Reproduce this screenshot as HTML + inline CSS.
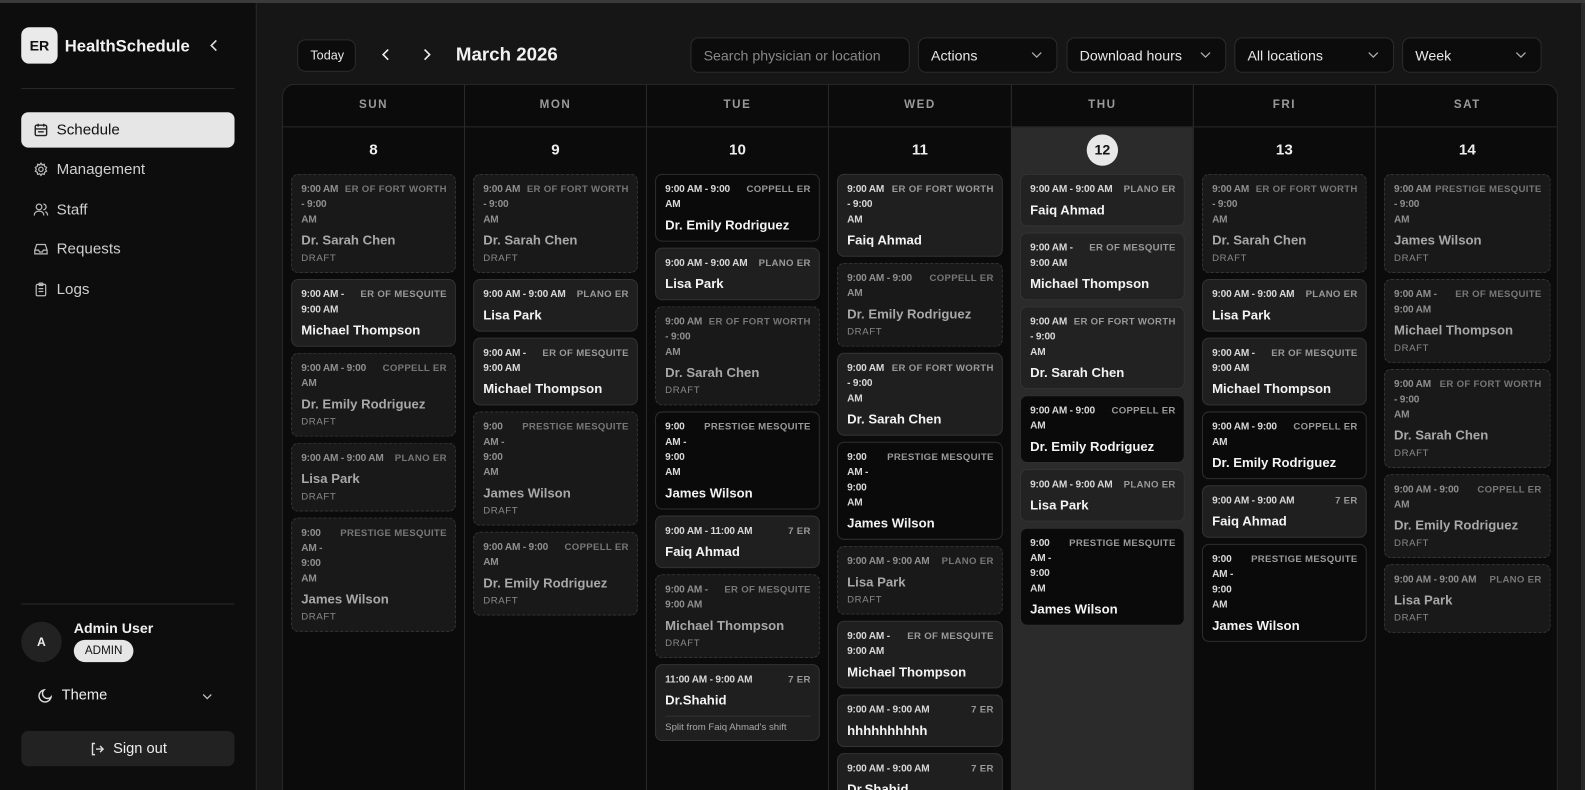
<!DOCTYPE html>
<html><head><meta charset="utf-8"><style>
*{box-sizing:border-box;margin:0;padding:0}
html,body{width:1585px;height:790px;overflow:hidden;background:#161616}
#w{position:absolute;left:0;top:0;width:1568px;height:782px;transform:scale(1.0109);transform-origin:0 0;overflow:hidden;background:#161616}
body{font-family:"Liberation Sans",sans-serif;color:#eee;position:relative}
.topbar{position:absolute;left:0;top:0;width:1568px;height:3px;background:#3a3a3a}
.side{position:absolute;left:0;top:3px;width:254px;height:787px;background:#0d0d0d;border-right:1px solid #2a2a2a}
.logo{position:absolute;left:21px;top:24px;width:36px;height:36px;border-radius:8px;background:#eaeaea;color:#111;font-weight:700;font-size:14px;display:flex;align-items:center;justify-content:center}
.brand{position:absolute;left:64px;top:34px;font-size:16.5px;font-weight:700;color:#f2f2f2}
.hr{position:absolute;left:21px;width:211px;height:1px;background:#2a2a2a}
.nav{position:absolute;left:21px;width:211px;height:35px;border-radius:7px;display:flex;align-items:center;padding-left:35px;font-size:15px;color:#cfcfcf}
.nav.act{background:#e6e6e6;color:#111}
.nav svg{position:absolute;left:12px;top:10px}
.btn{position:absolute;height:32px;border:1px solid #2c2c2c;border-radius:8px;background:#0c0c0c;font-size:14px;color:#e8e8e8;display:flex;align-items:center;padding-left:12px}
.btn svg{position:absolute;right:14px;top:13px}
.cal{position:absolute;left:279px;top:83px;width:1262px;height:707px;border:1px solid #2a2a2a;border-bottom:none;border-radius:12px 12px 0 0;background:#0b0b0b;overflow:hidden}
.col{position:absolute;top:0;height:707px;border-left:1px solid #2a2a2a;overflow:hidden}
.col .h{height:42px;border-bottom:1px solid #2a2a2a;text-align:center;font-size:11.5px;letter-spacing:1.5px;font-weight:700;color:#9a9a9a;line-height:41px}
.col .d{height:46px;text-align:center;font-size:15px;font-weight:700;color:#eee;line-height:46px}
.today .d span{display:inline-block;width:31px;height:31px;border-radius:50%;background:#e8e8e8;color:#111;line-height:31px;font-size:14px;margin-top:7px}
.c{margin:0 8px 6px 8px;border:1px solid #333;border-radius:7px;padding:7px 8px 6px 9px;background:#1f1f1f;position:relative}
.c.dr{border:1px dashed #353535;background:#191919}
.c.bk{background:#0a0a0a;border-color:#2e2e2e}
.t{font-size:10px;line-height:15px;font-weight:700;color:#d8d8d8;white-space:nowrap;letter-spacing:-.2px}
.l{position:absolute;right:8px;top:7px;font-size:9.5px;line-height:15px;font-weight:700;letter-spacing:.3px;color:#9a9a9a;white-space:nowrap}
.n{font-size:13px;font-weight:700;color:#f3f3f3;margin-top:4px;line-height:18px}
.dr .t{color:#8f8f8f}.dr .l{color:#777}.dr .n{color:#a8a8a8}
.df{font-size:9.5px;color:#8a8a8a;letter-spacing:.6px;margin-top:2px;line-height:14px}
.sp{font-size:9.5px;color:#aaa;border-top:1px solid #333;margin-top:6px;padding-top:4px;line-height:13px}
</style></head><body><div id="w">
<div class="topbar"></div>
<div class="side">
<div class="logo">ER</div>
<div class="brand">HealthSchedule</div>
<svg style="position:absolute;left:206px;top:35px" width="12" height="14" viewBox="0 0 12 14"><path d="M8 2L3 7l5 5" stroke="#ddd" stroke-width="1.6" fill="none"/></svg>
<div class="hr" style="top:84px"></div>
<div class="nav act" style="top:108px"><svg width="15" height="15" viewBox="0 0 16 16" fill="none" stroke="#222" stroke-width="1.5"><rect x="2" y="3" width="12" height="11" rx="1.5"/><path d="M5 1.5v3M11 1.5v3M2 7h12M5 10h6"/></svg>Schedule</div>
<div class="nav" style="top:147px"><svg width="15" height="15" viewBox="0 0 16 16" fill="none" stroke="#bbb" stroke-width="1.3"><circle cx="8" cy="8" r="2.3"/><path d="M8 1.5l1.3 1.8 2.2-.6.4 2.2 2 1.1-1 2 1 2-2 1.1-.4 2.2-2.2-.6L8 14.5l-1.3-1.8-2.2.6-.4-2.2-2-1.1 1-2-1-2 2-1.1.4-2.2 2.2.6z"/></svg>Management</div>
<div class="nav" style="top:187px"><svg width="15" height="15" viewBox="0 0 16 16" fill="none" stroke="#bbb" stroke-width="1.3"><circle cx="6" cy="5" r="3"/><path d="M1 14c0-3 2-4.5 5-4.5s5 1.5 5 4.5M10.5 2a3 3 0 010 6M12.5 10c1.5.5 2.5 2 2.5 4"/></svg>Staff</div>
<div class="nav" style="top:226px"><svg width="15" height="15" viewBox="0 0 16 16" fill="none" stroke="#bbb" stroke-width="1.3"><path d="M1.5 9l2-6h9l2 6v4h-13zM1.5 9h4l1 2h3l1-2h4"/></svg>Requests</div>
<div class="nav" style="top:266px"><svg width="15" height="15" viewBox="0 0 16 16" fill="none" stroke="#bbb" stroke-width="1.3"><rect x="3" y="2.5" width="10" height="12" rx="1.3"/><rect x="6" y="1.2" width="4" height="2.5" rx=".5"/><path d="M5.5 7h5M5.5 10h5"/></svg>Logs</div>
<div class="hr" style="top:594px"></div>
<div style="position:absolute;left:21px;top:612px;width:40px;height:40px;border-radius:50%;background:#222;color:#eee;font-size:12px;font-weight:700;display:flex;align-items:center;justify-content:center">A</div>
<div style="position:absolute;left:73px;top:610px;font-size:14px;font-weight:700;color:#f0f0f0">Admin User</div>
<div style="position:absolute;left:73px;top:630px;height:22px;padding:0 11px;border-radius:11px;background:#e6e6e6;color:#111;font-size:11.5px;line-height:22px">ADMIN</div>
<svg style="position:absolute;left:37px;top:677px" width="16" height="16" viewBox="0 0 16 16"><path d="M13.5 9.5A6 6 0 116.5 2.5a4.5 4.5 0 007 7z" stroke="#ddd" stroke-width="1.4" fill="none"/></svg>
<div style="position:absolute;left:61px;top:677px;font-size:14.5px;color:#eee">Theme</div>
<svg style="position:absolute;left:199px;top:682px" width="12" height="8" viewBox="0 0 12 8"><path d="M2 2l4 4 4-4" stroke="#bbb" stroke-width="1.3" fill="none"/></svg>
<div style="position:absolute;left:21px;top:720px;width:211px;height:35px;border-radius:7px;background:#222;display:flex;align-items:center;justify-content:center;font-size:14.5px;color:#eee"><svg style="margin-right:8px" width="16" height="16" viewBox="0 0 16 16" fill="none" stroke="#ddd" stroke-width="1.4"><path d="M6 2.5H3.5v11H6M7 8h7M11 5l3 3-3 3"/></svg>Sign out</div>
</div>

<div class="btn" style="left:294px;top:39px;width:58px;font-size:12.5px">Today</div>
<svg style="position:absolute;left:376px;top:47px" width="12" height="14" viewBox="0 0 12 14"><path d="M8 2L3 7l5 5" stroke="#eee" stroke-width="1.6" fill="none"/></svg>
<svg style="position:absolute;left:416px;top:47px" width="12" height="14" viewBox="0 0 12 14"><path d="M4 2l5 5-5 5" stroke="#eee" stroke-width="1.6" fill="none"/></svg>
<div style="position:absolute;left:451px;top:43px;font-size:18.5px;font-weight:700;color:#f2f2f2">March 2026</div>
<div class="btn" style="left:683px;top:37px;width:217px;height:35px;color:#888">Search physician or location</div>
<div class="btn" style="left:908px;top:37px;width:138px;height:35px">Actions<svg width="11" height="7" viewBox="0 0 11 7"><path d="M1 1l4.5 4.5L10 1" stroke="#aaa" stroke-width="1.3" fill="none"/></svg></div>
<div class="btn" style="left:1055px;top:37px;width:158px;height:35px">Download hours<svg width="11" height="7" viewBox="0 0 11 7"><path d="M1 1l4.5 4.5L10 1" stroke="#aaa" stroke-width="1.3" fill="none"/></svg></div>
<div class="btn" style="left:1221px;top:37px;width:158px;height:35px">All locations<svg width="11" height="7" viewBox="0 0 11 7"><path d="M1 1l4.5 4.5L10 1" stroke="#aaa" stroke-width="1.3" fill="none"/></svg></div>
<div class="btn" style="left:1387px;top:37px;width:138px;height:35px">Week<svg width="11" height="7" viewBox="0 0 11 7"><path d="M1 1l4.5 4.5L10 1" stroke="#aaa" stroke-width="1.3" fill="none"/></svg></div>
<div style="position:absolute;left:1564px;top:3px;width:4px;height:787px;background:#2a2a2a"></div>

<div class="cal">
<div class="col" style="left:-1px;width:180px">
<div class="h">SUN</div><div class="d">8</div>
<div class="c dr"><div class="t">9:00 AM<br>- 9:00<br>AM</div><div class="l">ER OF FORT WORTH</div><div class="n">Dr. Sarah Chen</div><div class="df">DRAFT</div></div>
<div class="c"><div class="t">9:00 AM -<br>9:00 AM</div><div class="l">ER OF MESQUITE</div><div class="n">Michael Thompson</div></div>
<div class="c dr"><div class="t">9:00 AM - 9:00<br>AM</div><div class="l">COPPELL ER</div><div class="n">Dr. Emily Rodriguez</div><div class="df">DRAFT</div></div>
<div class="c dr"><div class="t">9:00 AM - 9:00 AM</div><div class="l">PLANO ER</div><div class="n">Lisa Park</div><div class="df">DRAFT</div></div>
<div class="c dr"><div class="t">9:00<br>AM -<br>9:00<br>AM</div><div class="l">PRESTIGE MESQUITE</div><div class="n">James Wilson</div><div class="df">DRAFT</div></div>
</div>
<div class="col" style="left:179px;width:180px">
<div class="h">MON</div><div class="d">9</div>
<div class="c dr"><div class="t">9:00 AM<br>- 9:00<br>AM</div><div class="l">ER OF FORT WORTH</div><div class="n">Dr. Sarah Chen</div><div class="df">DRAFT</div></div>
<div class="c"><div class="t">9:00 AM - 9:00 AM</div><div class="l">PLANO ER</div><div class="n">Lisa Park</div></div>
<div class="c"><div class="t">9:00 AM -<br>9:00 AM</div><div class="l">ER OF MESQUITE</div><div class="n">Michael Thompson</div></div>
<div class="c dr"><div class="t">9:00<br>AM -<br>9:00<br>AM</div><div class="l">PRESTIGE MESQUITE</div><div class="n">James Wilson</div><div class="df">DRAFT</div></div>
<div class="c dr"><div class="t">9:00 AM - 9:00<br>AM</div><div class="l">COPPELL ER</div><div class="n">Dr. Emily Rodriguez</div><div class="df">DRAFT</div></div>
</div>
<div class="col" style="left:359px;width:180px">
<div class="h">TUE</div><div class="d">10</div>
<div class="c bk"><div class="t">9:00 AM - 9:00<br>AM</div><div class="l">COPPELL ER</div><div class="n">Dr. Emily Rodriguez</div></div>
<div class="c"><div class="t">9:00 AM - 9:00 AM</div><div class="l">PLANO ER</div><div class="n">Lisa Park</div></div>
<div class="c dr"><div class="t">9:00 AM<br>- 9:00<br>AM</div><div class="l">ER OF FORT WORTH</div><div class="n">Dr. Sarah Chen</div><div class="df">DRAFT</div></div>
<div class="c bk"><div class="t">9:00<br>AM -<br>9:00<br>AM</div><div class="l">PRESTIGE MESQUITE</div><div class="n">James Wilson</div></div>
<div class="c"><div class="t">9:00 AM - 11:00 AM</div><div class="l">7 ER</div><div class="n">Faiq Ahmad</div></div>
<div class="c dr"><div class="t">9:00 AM -<br>9:00 AM</div><div class="l">ER OF MESQUITE</div><div class="n">Michael Thompson</div><div class="df">DRAFT</div></div>
<div class="c"><div class="t">11:00 AM - 9:00 AM</div><div class="l">7 ER</div><div class="n">Dr.Shahid</div><div class="sp">Split from Faiq Ahmad's shift</div></div>
</div>
<div class="col" style="left:539px;width:181px">
<div class="h">WED</div><div class="d">11</div>
<div class="c"><div class="t">9:00 AM<br>- 9:00<br>AM</div><div class="l">ER OF FORT WORTH</div><div class="n">Faiq Ahmad</div></div>
<div class="c dr"><div class="t">9:00 AM - 9:00<br>AM</div><div class="l">COPPELL ER</div><div class="n">Dr. Emily Rodriguez</div><div class="df">DRAFT</div></div>
<div class="c"><div class="t">9:00 AM<br>- 9:00<br>AM</div><div class="l">ER OF FORT WORTH</div><div class="n">Dr. Sarah Chen</div></div>
<div class="c bk"><div class="t">9:00<br>AM -<br>9:00<br>AM</div><div class="l">PRESTIGE MESQUITE</div><div class="n">James Wilson</div></div>
<div class="c dr"><div class="t">9:00 AM - 9:00 AM</div><div class="l">PLANO ER</div><div class="n">Lisa Park</div><div class="df">DRAFT</div></div>
<div class="c"><div class="t">9:00 AM -<br>9:00 AM</div><div class="l">ER OF MESQUITE</div><div class="n">Michael Thompson</div></div>
<div class="c"><div class="t">9:00 AM - 9:00 AM</div><div class="l">7 ER</div><div class="n">hhhhhhhhhh</div></div>
<div class="c"><div class="t">9:00 AM - 9:00 AM</div><div class="l">7 ER</div><div class="n">Dr.Shahid</div></div>
</div>
<div class="col today" style="left:720px;width:180px;background:#2b2b2b">
<div class="h" style="background:#0b0b0b">THU</div><div class="d"><span>12</span></div>
<div class="c" style="background:#222"><div class="t">9:00 AM - 9:00 AM</div><div class="l">PLANO ER</div><div class="n">Faiq Ahmad</div></div>
<div class="c" style="background:#222"><div class="t">9:00 AM -<br>9:00 AM</div><div class="l">ER OF MESQUITE</div><div class="n">Michael Thompson</div></div>
<div class="c" style="background:#222"><div class="t">9:00 AM<br>- 9:00<br>AM</div><div class="l">ER OF FORT WORTH</div><div class="n">Dr. Sarah Chen</div></div>
<div class="c bk"><div class="t">9:00 AM - 9:00<br>AM</div><div class="l">COPPELL ER</div><div class="n">Dr. Emily Rodriguez</div></div>
<div class="c" style="background:#222"><div class="t">9:00 AM - 9:00 AM</div><div class="l">PLANO ER</div><div class="n">Lisa Park</div></div>
<div class="c bk"><div class="t">9:00<br>AM -<br>9:00<br>AM</div><div class="l">PRESTIGE MESQUITE</div><div class="n">James Wilson</div></div>
</div>
<div class="col" style="left:900px;width:180px">
<div class="h">FRI</div><div class="d">13</div>
<div class="c dr"><div class="t">9:00 AM<br>- 9:00<br>AM</div><div class="l">ER OF FORT WORTH</div><div class="n">Dr. Sarah Chen</div><div class="df">DRAFT</div></div>
<div class="c"><div class="t">9:00 AM - 9:00 AM</div><div class="l">PLANO ER</div><div class="n">Lisa Park</div></div>
<div class="c"><div class="t">9:00 AM -<br>9:00 AM</div><div class="l">ER OF MESQUITE</div><div class="n">Michael Thompson</div></div>
<div class="c bk"><div class="t">9:00 AM - 9:00<br>AM</div><div class="l">COPPELL ER</div><div class="n">Dr. Emily Rodriguez</div></div>
<div class="c"><div class="t">9:00 AM - 9:00 AM</div><div class="l">7 ER</div><div class="n">Faiq Ahmad</div></div>
<div class="c bk"><div class="t">9:00<br>AM -<br>9:00<br>AM</div><div class="l">PRESTIGE MESQUITE</div><div class="n">James Wilson</div></div>
</div>
<div class="col" style="left:1080px;width:182px">
<div class="h">SAT</div><div class="d">14</div>
<div class="c dr"><div class="t">9:00 AM<br>- 9:00<br>AM</div><div class="l">PRESTIGE MESQUITE</div><div class="n">James Wilson</div><div class="df">DRAFT</div></div>
<div class="c dr"><div class="t">9:00 AM -<br>9:00 AM</div><div class="l">ER OF MESQUITE</div><div class="n">Michael Thompson</div><div class="df">DRAFT</div></div>
<div class="c dr"><div class="t">9:00 AM<br>- 9:00<br>AM</div><div class="l">ER OF FORT WORTH</div><div class="n">Dr. Sarah Chen</div><div class="df">DRAFT</div></div>
<div class="c dr"><div class="t">9:00 AM - 9:00<br>AM</div><div class="l">COPPELL ER</div><div class="n">Dr. Emily Rodriguez</div><div class="df">DRAFT</div></div>
<div class="c dr"><div class="t">9:00 AM - 9:00 AM</div><div class="l">PLANO ER</div><div class="n">Lisa Park</div><div class="df">DRAFT</div></div>
</div>
</div>
</div></body></html>
